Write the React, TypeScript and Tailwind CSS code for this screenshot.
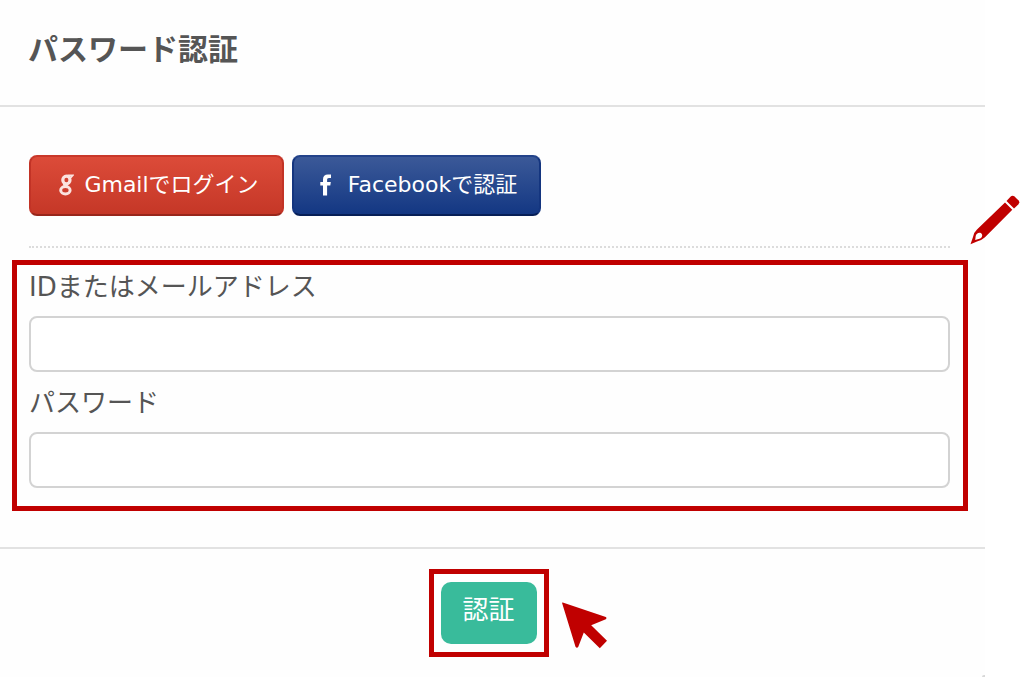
import type { ReactNode } from "react";

function GoogleIcon() {
  return (
    <svg viewBox="0 0 16 22" className="h-[22px] w-4" fill="none" stroke="#fbe3df">
      <ellipse cx="8.4" cy="6" rx="3.600" ry="3.800" strokeWidth="3.200" />
      <path d="M9.500 1.400h5.300l-1.600 1.800h-2.200" strokeWidth="1.600" />
      <path d="M6.500 9.500c-.8 1.400.5 2 3 3.200" strokeWidth="2.600" />
      <ellipse cx="7.400" cy="16.200" rx="4.700" ry="3.700" strokeWidth="3" />
    </svg>
  );
}

function FacebookIcon() {
  return (
    <svg viewBox="0 0 12 22" className="h-[22px] w-3" fill="#fff">
      <path d="M3 21.5V11.5H.3V8H3V5.4C3 2 4.8.4 7.9.4c1.400 0 2.600.1 3.100.2v3.300H9c-1.500 0-1.900.8-1.900 2V8h3.700l-.5 3.500H7.100v10z" />
    </svg>
  );
}

function PencilIcon() {
  return (
    <svg viewBox="0 0 50 50" className="absolute top-[195px] right-1 h-[50px] w-[50px]" fill="#c00000">
      <path
        fillRule="evenodd"
        d="M35 7.500 42.300 14.800 15 42.200Q12 45 7 46.500L.5 49.200 3 42Q4 37 7 34.500ZM5.200 45 10.300 43.500C13 42 12.500 39 10.800 38C8.500 37 6 39 5.700 41Z"
      />
      <path d="M36.500 6 40.500 1.700Q42.500-.3 44.600 1.600L48.400 5.300Q50.200 7.300 48.300 9.400L44 13.500Z" />
    </svg>
  );
}

function PointerIcon() {
  return (
    <svg viewBox="0 0 48 48" className="absolute top-7 left-full ml-4 h-12 w-12" fill="#c00000">
      <path d="M2 .8Q2.500.3 3.500.8L45.800 15Q47.500 16 45.800 17.200L31.200 23.200 47 38.800 39.800 46.300 23.800 30.500 18.300 44.800Q17 46.500 15.500 44.800Z" />
    </svg>
  );
}

function SocialButton({ className, icon, children }: { className: string; icon: ReactNode; children: ReactNode }) {
  return (
    <button
      type="button"
      className={`flex h-[61px] items-center justify-center rounded-lg border-2 pb-px pl-1 text-[22px] leading-8 text-white ${className}`}
    >
      {icon}
      <span>{children}</span>
    </button>
  );
}

function Field({ id, type, label }: { id: string; type: string; label: string }) {
  return (
    <div>
      <label htmlFor={id} className="block pt-[6px] pb-[13px] text-[26px] leading-8">
        {label}
      </label>
      <input
        id={id}
        type={type}
        className="block h-14 w-full rounded-lg border-2 border-[#d3d3d3] bg-white px-3 text-[26px] outline-none"
      />
    </div>
  );
}

export default function App() {
  return (
    <div className="relative bg-white pr-[39px] font-['DejaVu_Sans','Noto_Sans_CJK_JP',sans-serif] text-[#555]">
      <form className="bg-[#fefefe]" onSubmit={(e) => e.preventDefault()}>
        <header className="border-b-2 border-[#e2e2e2] pt-7 pb-[33px] pl-7">
          <h1 className="text-[30px] leading-[44px] font-bold">パスワード認証</h1>
        </header>

        <div className="pt-12 pr-[17px] pb-9 pl-3">
          <div className="pr-[18px] pl-[17px]">
            <div className="flex gap-2">
              <SocialButton
                className="w-[255px] gap-[10px] border-t-[#c9382a] border-x-[#c23326] border-b-[#98261b] bg-linear-to-b from-[#dc4b39] to-[#c53727]"
                icon={<GoogleIcon />}
              >
                Gmailでログイン
              </SocialButton>
              <SocialButton
                className="w-[249px] gap-4 border-t-[#23438a] border-x-[#14357f] border-b-[#071f57] bg-linear-to-b from-[#3b5998] to-[#133783]"
                icon={<FacebookIcon />}
              >
                Facebookで認証
              </SocialButton>
            </div>
            <hr className="mt-[30px] mb-3 border-t-2 border-dotted border-[#dcdcdc]" />
          </div>

          <div className="border-[5px] border-[#c00000] pr-[13px] pb-[18px] pl-3">
            <Field id="login-id" type="text" label="IDまたはメールアドレス" />
            <div className="mt-[9px]">
              <Field id="password" type="password" label="パスワード" />
            </div>
          </div>
        </div>

        <footer className="border-t-2 border-[#e2e2e2] pt-5">
          <div className="flex justify-center pr-2 pb-[18px]">
            <div className="relative border-[5px] border-[#c00000] px-[7px] py-2">
              <button
                type="submit"
                className="block h-[62px] w-24 rounded-[10px] bg-[#39bb9b] pb-[6px] text-[26px] leading-8 text-white"
              >
                認証
              </button>
              <PointerIcon />
            </div>
          </div>
          <div className="ml-auto h-[2px] w-[3px] rounded-tl-full bg-[#d8d8d8]" />
        </footer>
      </form>
      <PencilIcon />
    </div>
  );
}
